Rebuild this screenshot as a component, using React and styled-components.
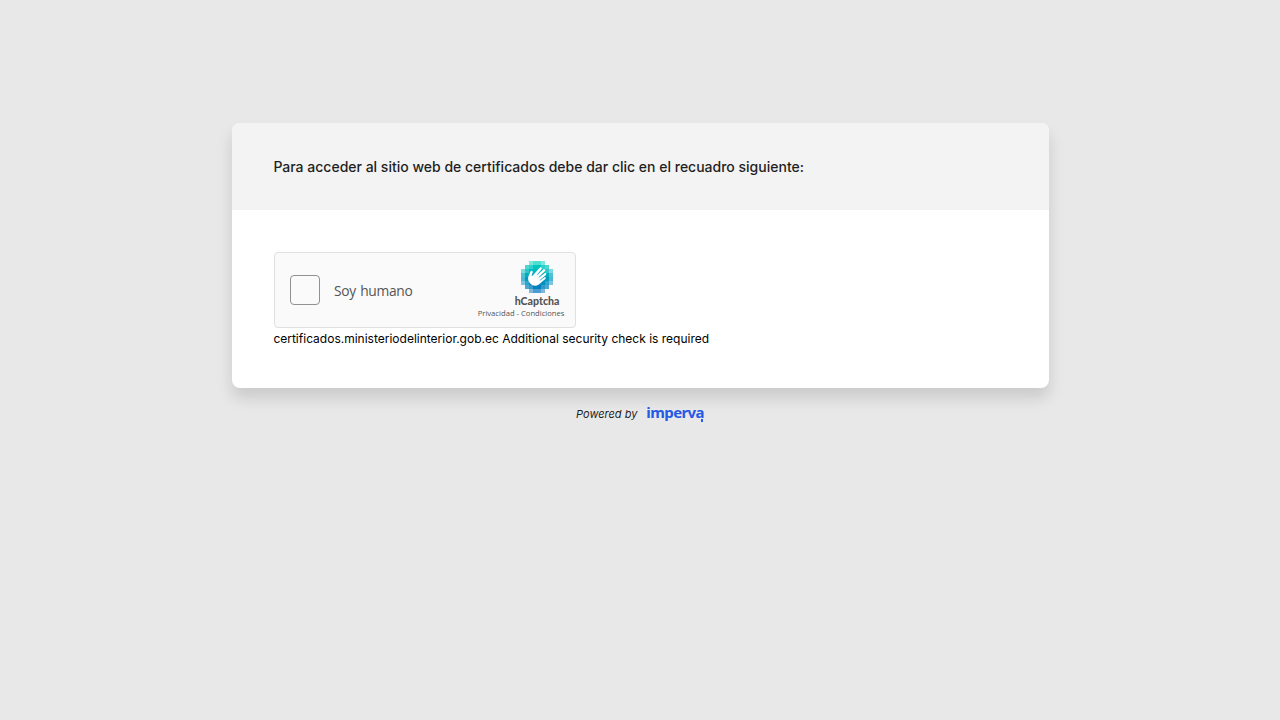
import React from "react";
import styled, { createGlobalStyle } from "styled-components";

const GlobalStyle = createGlobalStyle`
  * { box-sizing: border-box; }
  body { margin: 0; background: #e8e8e8; font-family: Inter, "Liberation Sans", sans-serif; color: #000; }
`;

const Page = styled.main`
  display: flex;
  flex-direction: column;
  align-items: center;
  min-height: 720px;
  padding: 123px 0 0 1px;
`;

const Card = styled.section`
  width: 817px;
  height: 265px;
  border-radius: 8px;
  overflow: hidden;
  background: #fff;
  box-shadow: 0 10px 15px rgba(0, 0, 0, 0.13);
`;

const CardHeader = styled.header`
  display: flex;
  align-items: center;
  height: 87px;
  padding: 0 41.4px;
  background: #f3f3f3;
`;

const Title = styled.h1`
  margin: 0;
  font-size: 14px;
  font-weight: 500;
  line-height: 20px;
  color: #1f1f1f;
  white-space: nowrap;
`;

const CardBody = styled.div`
  padding: 42px 41.4px;
`;

const Widget = styled.div`
  display: flex;
  justify-content: space-between;
  width: 302px;
  height: 76px;
  margin-left: 0.6px;
  padding: 0 10px 0 15px;
  border: 1px solid #e0e0e0;
  border-radius: 4px;
  background: #fafafa;
  font-family: "Open Sans", "Noto Sans", sans-serif;
`;

const CheckLabel = styled.label`
  display: flex;
  align-items: center;
  gap: 14px;
  color: #555;
  font-size: 13.8px;
  line-height: 20px;
`;

const LabelText = styled.span`
  padding-top: 2px;
  letter-spacing: -0.33px;
  word-spacing: 1.2px;
`;

const CheckBox = styled.span`
  width: 30px;
  height: 30px;
  border: 1px solid #919191;
  border-radius: 4px;
  background: #fafafa;
`;

const Brand = styled.div`
  display: flex;
  flex-direction: column;
  align-items: flex-end;
  padding-top: 8px;
  color: #555;
`;

const BrandLogo = styled.svg`
  display: block;
  width: 32px;
  height: 32px;
  margin-right: 12px;
`;

const BrandName = styled.span`
  margin: 1px 5.5px 0 0;
  font-family: Lato, "Open Sans", sans-serif;
  font-size: 10.6px;
  font-weight: 900;
  line-height: 14px;
`;

const Links = styled.span`
  margin-right: 0.5px;
  font-size: 7.65px;
  line-height: 10px;
  white-space: nowrap;
`;

const Note = styled.p`
  margin: 3px 0 0;
  font-size: 12px;
  line-height: 15px;
`;

const Footer = styled.footer`
  display: flex;
  align-items: center;
  gap: 9px;
  margin: 14px 1px 0 0;
  height: 22px;
`;

const Powered = styled.span`
  font-size: 11px;
  font-style: italic;
  color: #1f1f1f;
  padding-top: 2px;
`;

const Imperva = styled.span`
  position: relative;
  margin-top: -2px;
  font-family: "Noto Sans", sans-serif;
  font-size: 15px;
  font-weight: 700;
  line-height: 20px;
  letter-spacing: -0.6px;
  color: #255ae6;

  &::after {
    content: "";
    position: absolute;
    right: 1px;
    bottom: 0;
    width: 2px;
    height: 3px;
    background: #255ae6;
  }
`;

const rowColors = ["#00D4BF", "#00C6BF", "#00B9BF", "#00ABBF", "#009DBF", "#008FBF", "#0082BF", "#0074BF"];
const cellOpacity = [
  [0, 0, 0.5, 0.7, 0.7, 0.5, 0, 0],
  [0, 0.7, 0.8, 1, 1, 0.8, 0.7, 0],
  [0.5, 0.8, 1, 1, 1, 1, 0.8, 0.5],
  [0.7, 1, 1, 1, 1, 1, 1, 0.7],
  [0.7, 1, 1, 1, 1, 1, 1, 0.7],
  [0.5, 0.8, 1, 1, 1, 1, 0.8, 0.5],
  [0, 0.7, 0.8, 1, 1, 0.8, 0.7, 0],
  [0, 0, 0.5, 0.7, 0.7, 0.5, 0, 0],
];

const HandLogo = () => (
  <BrandLogo viewBox="0 0 32 32" aria-hidden="true">
    {cellOpacity.map((row, y) =>
      row.map((o, x) =>
        o ? <rect key={`${x}-${y}`} x={x * 4} y={y * 4} width="4" height="4" fill={rowColors[y]} opacity={o} /> : null
      )
    )}
    <path
      transform="translate(-2.6 -1.2) scale(0.9)"
      fill="#fff"
      d="M14.5 17.4l1.2-2.8c.4-.7.36-1.6-.14-2.1-.07-.07-.14-.12-.22-.17-.29-.2-.66-.2-1-.1-.37.12-.69.36-.9.69 0 0-1.74 4.05-2.38 5.87s-.39 5.15 2.1 7.64c2.64 2.64 6.46 3.24 8.9 1.41l.3-.19 7.5-6.26c.36-.3.9-.92.42-1.64-.48-.69-1.38-.22-1.75.03l-4.32 3.14c-.08.07-.2.06-.27-.02-.11-.11-.13-.41 0-.52l6.62-5.61c.57-.51.65-1.27.18-1.79-.46-.5-1.18-.49-1.75.02l-5.95 4.65c-.11.09-.28.07-.37-.04-.12-.13-.17-.35-.03-.48l6.75-6.54c.53-.5.56-1.33.06-1.87a1.26 1.26 0 0 0-.9-.38c-.35 0-.68.13-.92.37l-6.89 6.47c-.17.16-.49 0-.53-.2-.02-.07.01-.14.06-.2l5.27-6.01c.55-.51.58-1.37.07-1.92s-1.37-.58-1.92-.07l-8 8.84c-.28.28-.7.3-.9.14-.13-.1-.14-.27-.05-.39z"
    />
  </BrandLogo>
);

export default function App() {
  return (
    <>
      <GlobalStyle />
      <Page>
        <Card>
          <CardHeader>
            <Title>Para acceder al sitio web de certificados debe dar clic en el recuadro siguiente:</Title>
          </CardHeader>
          <CardBody>
            <Widget>
              <CheckLabel>
                <CheckBox role="checkbox" aria-checked="false" tabIndex={0} />
                <LabelText>Soy humano</LabelText>
              </CheckLabel>
              <Brand>
                <HandLogo />
                <BrandName>hCaptcha</BrandName>
                <Links>Privacidad - Condiciones</Links>
              </Brand>
            </Widget>
            <Note>certificados.ministeriodelinterior.gob.ec Additional security check is required</Note>
          </CardBody>
        </Card>
        <Footer>
          <Powered>Powered by</Powered>
          <Imperva>imperva</Imperva>
        </Footer>
      </Page>
    </>
  );
}
